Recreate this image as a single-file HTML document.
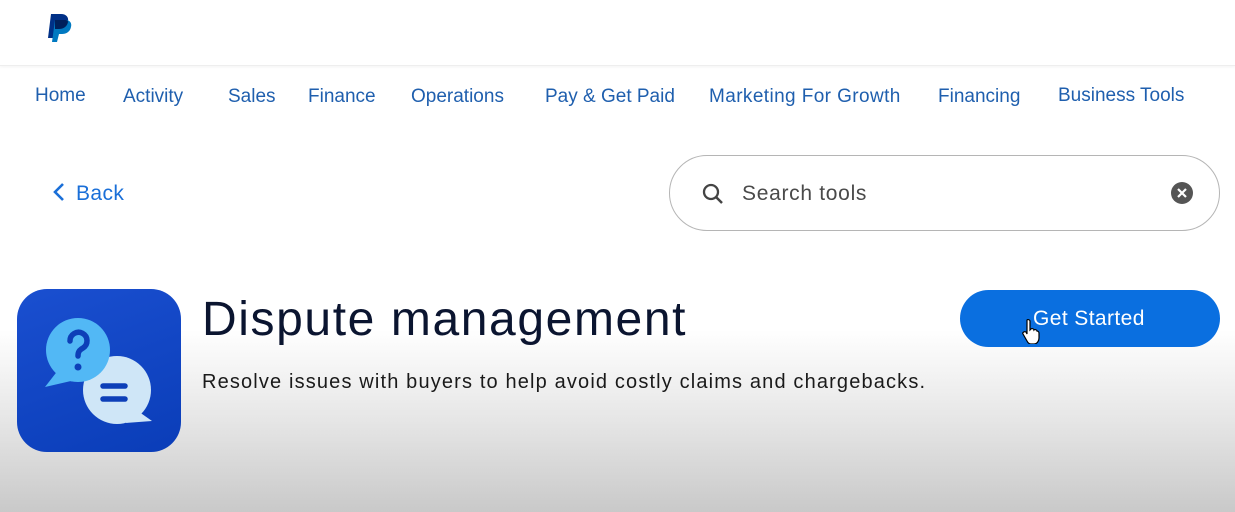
<!DOCTYPE html>
<html><head><meta charset="utf-8"><style>
*{margin:0;padding:0;box-sizing:border-box}
body{width:1235px;height:512px;overflow:hidden;font-family:"Liberation Sans",sans-serif;position:relative;
background:linear-gradient(180deg,#fff 0,#fff 330px,#e6e6e6 420px,#c9c9c9 512px);}
.top{position:absolute;left:0;top:0;width:1235px;height:66px;background:#fff;border-bottom:1px solid #eee;box-shadow:0 1px 3px rgba(0,0,0,.05)}
.nav a{position:absolute;top:86px;font-size:19px;color:#1f5fae;text-decoration:none;white-space:nowrap}
.back{position:absolute;left:52px;top:182px;font-size:21px;color:#1a6fd8;letter-spacing:.4px}
.search{position:absolute;left:669px;top:155px;width:551px;height:76px;border:1px solid #b5b5b5;border-radius:38px;background:#fff}
.search span{position:absolute;left:72px;top:26px;font-size:21px;color:#4a4a4a;letter-spacing:.7px}
.icon{position:absolute;left:17px;top:289px;width:164px;height:163px;border-radius:30px;background:linear-gradient(160deg,#1a4fd0,#0a3db8)}
h1{position:absolute;left:202px;top:292px;font-size:48px;font-weight:normal;color:#0b1530;letter-spacing:1.6px}
.sub{position:absolute;left:202px;top:371px;font-size:20px;color:#1a1a1a;letter-spacing:1.15px}
.btn{position:absolute;left:960px;top:290px;width:260px;height:57px;border-radius:29px;background:#0a6fe0;color:#fff;font-size:21px;line-height:57px;padding-left:73px;letter-spacing:.4px}
</style></head><body>
<div class="top">
<svg style="position:absolute;left:46px;top:13px" width="26" height="30" viewBox="0 0 26 30">
<path d="M5 1h10c5 0 8 3 7 8-1 5-5 7-9 7h-4l-2 9H2z" fill="#003087"/>
<path d="M9 7h10c5 0 7 3 6 7-1 5-5 7-9 7h-3l-2 8H6z" fill="#0079c1"/>
<path d="M9 7h10c2 0 3 1 3 2-1 5-5 7-9 7h-4z" fill="#00205b"/>
</svg>
</div>
<div class="nav">
<a style="left:35px;top:85px">Home</a><a style="left:123px">Activity</a><a style="left:228px">Sales</a><a style="left:308px">Finance</a><a style="left:411px">Operations</a><a style="left:545px">Pay &amp; Get Paid</a><a style="left:709px;letter-spacing:.4px">Marketing For Growth</a><a style="left:938px">Financing</a><a style="left:1058px;top:85px">Business Tools</a>
</div>
<div class="back"><svg width="14" height="20" viewBox="0 0 14 20" style="vertical-align:-2px;margin-right:10px"><path d="M11 2L3 10l8 8" fill="none" stroke="#1a6fd8" stroke-width="2.6"/></svg>Back</div>
<div class="search">
<svg style="position:absolute;left:32px;top:27px" width="22" height="22" viewBox="0 0 22 22"><circle cx="9" cy="9" r="7" fill="none" stroke="#444" stroke-width="2.3"/><path d="M14 14l6 6" stroke="#444" stroke-width="2.5"/></svg>
<span>Search tools</span>
<svg style="position:absolute;left:501px;top:26px" width="22" height="22" viewBox="0 0 22 22"><circle cx="11" cy="11" r="11" fill="#555"/><path d="M7 7l8 8M15 7l-8 8" stroke="#fff" stroke-width="2.2"/></svg>
</div>
<div class="icon">
<svg width="164" height="163" viewBox="0 0 164 163">
<circle cx="100" cy="101" r="34" fill="#cfe6f7"/>
<path d="M118 120l17 12-26 2z" fill="#cfe6f7"/>
<circle cx="61" cy="61" r="32" fill="#52b8f5"/>
<path d="M42 80l-14 18 26-6z" fill="#52b8f5"/>
<path d="M53 52a8.5 8.5 0 1 1 13 7c-3 2-5 3-5 8" fill="none" stroke="#0d3fb8" stroke-width="5.5" stroke-linecap="round"/>
<circle cx="61" cy="78" r="3.5" fill="#0d3fb8"/>
<path d="M86 97h22M86 110h22" stroke="#0d3fb8" stroke-width="5.5" stroke-linecap="round"/>
</svg>
</div>
<h1>Dispute management</h1>
<div class="sub">Resolve issues with buyers to help avoid costly claims and chargebacks.</div>
<div class="btn">Get Started</div>
<svg style="position:absolute;left:1022px;top:318px" width="18" height="26" viewBox="0 0 18 26"><path d="M5 2c1-1 3 0 3 1v9l1-1c1-1 3 0 3 1 1-1 3 0 3 1 1 0 2 1 2 2v5c0 3-2 6-5 6H9c-2 0-3-1-4-3L1 16c-1-1 1-3 3-2l1 2z" fill="#fff" stroke="#000" stroke-width="1.2"/></svg>
</body></html>
